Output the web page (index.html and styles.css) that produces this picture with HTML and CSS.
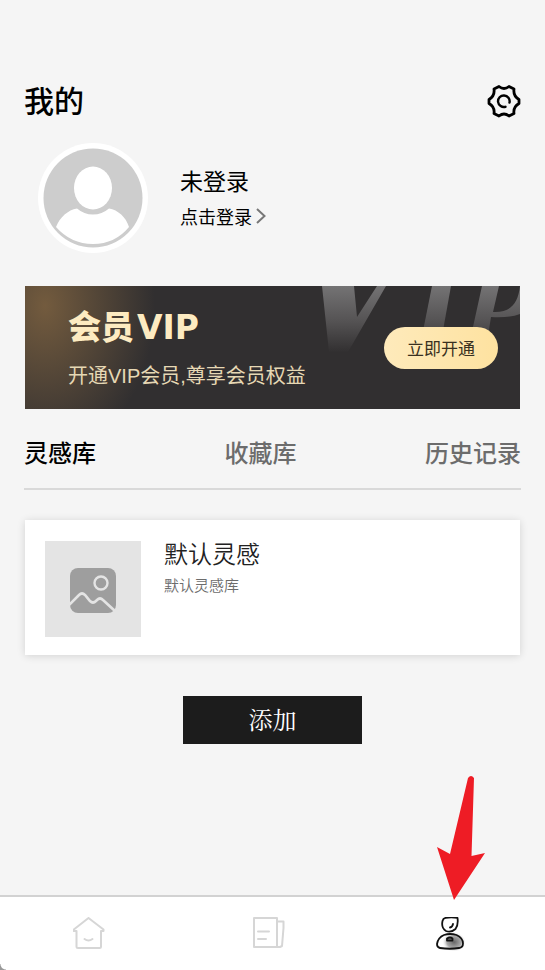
FILE: index.html
```html
<!DOCTYPE html>
<html lang="zh-CN">
<head>
<meta charset="utf-8">
<meta name="viewport" content="width=device-width, initial-scale=1">
<title>我的</title>
<link rel="stylesheet" href="styles.css">
</head>
<body>
<main class="page">
  <header class="topbar">
    <h1 class="topbar-title">我的</h1>
    <button class="icon-button" type="button" aria-label="设置">
      <svg width="34" height="34" viewBox="0 0 34 34" fill="none" stroke="#000" stroke-width="2.8" stroke-linejoin="round" stroke-linecap="round">
        <path d="M12 2.500Q17 6.500 22 2.500L27 5Q26 12 32 15.500V19.500Q26 23 27 29.500L22 32Q17 28 12 32L7 29.500Q8 23 2 19.500V15.500Q8 12 7 5Z"/>
        <path d="M22.500 18.500A5.800 5.800 0 1 0 18.500 22.800" stroke-width="2.400"/>
      </svg>
    </button>
  </header>

  <section class="profile">
    <svg class="avatar" viewBox="0 0 110 110" aria-hidden="true">
      <circle cx="55" cy="55" r="55" fill="#fff"/>
      <circle cx="55" cy="55" r="49.500" fill="#cdcdcd"/>
      <ellipse cx="55" cy="45" rx="19" ry="21.500" fill="#fff"/>
      <path d="M39 65.500Q46 71.500 55 71.500T71 65.500C80 67 88 74 91 84Q77 101 55 101T18 84C22 74 30 67 39 65.500Z" fill="#fff"/>
    </svg>
    <div class="profile-text">
      <p class="profile-name">未登录</p>
      <a class="profile-login" href="#login">点击登录
        <svg width="10" height="16" viewBox="0 0 10 16" fill="none" stroke="#777" stroke-width="2" aria-hidden="true"><path d="M1 1l7.500 7L1 15"/></svg>
      </a>
    </div>
  </section>

  <section class="vip">
    <svg class="vip-mark" width="198" height="70" viewBox="0 0 198 70" aria-hidden="true">
      <defs>
        <linearGradient id="fade" x1="0" y1="0" x2="0" y2="70" gradientUnits="userSpaceOnUse">
          <stop offset="0" stop-color="#747374"/>
          <stop offset="0.500" stop-color="#555354"/>
          <stop offset="0.950" stop-color="#312f30"/>
        </linearGradient>
      </defs>
      <g fill="url(#fade)">
        <path d="M0 0H32L35 31L55 0H64L26 66H7Z"/>
        <path d="M110 0H129L120 50H100Z"/>
        <path d="M160 0H177L171 26C188 27 196 18 198 0V28Q188 32 169 31L166 50H149Z"/>
      </g>
    </svg>
    <div class="vip-text">
      <h2 class="vip-title">会员<span class="vip-latin">VIP</span></h2>
      <p class="vip-note">开通VIP会员,尊享会员权益</p>
    </div>
    <button class="vip-button" type="button">立即开通</button>
  </section>

  <nav class="tabs" aria-label="内容">
    <button class="tab tab-active" type="button">灵感库</button>
    <button class="tab" type="button">收藏库</button>
    <button class="tab" type="button">历史记录</button>
  </nav>

  <article class="card">
    <div class="thumb">
      <svg width="48" height="48" viewBox="0 0 48 48" aria-hidden="true">
        <rect x="1" y="3" width="46" height="45" rx="8" fill="#9e9e9e"/>
        <circle cx="32" cy="18" r="6.500" fill="none" stroke="#e4e4e4" stroke-width="2.400"/>
        <path d="M0 40L10 30Q13 27 16 30L21 36Q24 39 27 36L28 35Q31 32 34 35L46 46" fill="none" stroke="#e4e4e4" stroke-width="2.600"/>
      </svg>
    </div>
    <div class="card-text">
      <h3 class="card-title">默认灵感</h3>
      <p class="card-note">默认灵感库</p>
    </div>
  </article>

  <button class="add" type="button">添加</button>
</main>

<nav class="bottom" aria-label="主导航">
  <a class="bottom-link" href="#home" aria-label="首页">
    <svg width="34" height="34" viewBox="0 0 34 34" fill="none" stroke="#d6d6d6" stroke-width="2" stroke-linejoin="round" stroke-linecap="round">
      <path d="M15.500 1L30.500 12.500V14H28V29.500Q28 31 26.500 31H5Q3.500 31 3.500 29.500V14H0.800V12.500Z"/>
      <path d="M11.500 22Q15.500 25 19.500 22"/>
    </svg>
  </a>
  <a class="bottom-link" href="#notes" aria-label="文档">
    <svg width="34" height="34" viewBox="0 0 34 34" fill="none" stroke="#d6d6d6" stroke-width="2" stroke-linejoin="round" stroke-linecap="round">
      <path d="M1 1H24V30H1ZM24 4.500H30.500V11L29 29L27 30H24M5 14.500H16M5 22H13"/>
    </svg>
  </a>
  <a class="bottom-link" href="#me" aria-label="我的" aria-current="page">
    <svg width="34" height="34" viewBox="0 0 34 34" fill="none" stroke="#111" stroke-width="1.800" stroke-linejoin="round" stroke-linecap="round">
      <defs>
        <radialGradient id="shade">
          <stop offset="0" stop-color="#666"/>
          <stop offset="0.600" stop-color="#aaa"/>
          <stop offset="1" stop-color="#fff" stop-opacity="0"/>
        </radialGradient>
      </defs>
      <ellipse cx="22" cy="25" rx="12" ry="10" fill="url(#shade)" stroke="none"/>
      <path d="M13.500 0.900Q19 0 25.500 0.900Q26.500 8 23.500 12Q19 16 14 14Q9 11 10.500 4Q11 1.500 13.500 0.900ZM18 10.500Q20.500 10 21 7"/>
      <path d="M12 18Q18 16 24.500 18Q31 21 31 26.500Q31 30.500 27 31Q18 32.500 8 31Q5 30.500 5 27Q6 20.500 12 18Z"/>
      <path d="M15 23.500V21.500Q18 19.500 20.500 21.500V23.500H15Z" fill="#888"/>
    </svg>
  </a>
  <svg class="pointer" width="50" height="126" viewBox="0 0 50 126" aria-hidden="true">
    <path d="M18 125L1 72L14 79L32 3Q35 -1 38 3L35.500 81L49 78Z" fill="#ee1c25"/>
  </svg>
  <span class="corner"></span>
</nav>
</body>
</html>
```

FILE: styles.css
```css
* {
  box-sizing: border-box;
  margin: 0;
  padding: 0;
}

body {
  display: flex;
  flex-direction: column;
  min-height: 100vh;
  background: #f5f5f5;
  color: #000;
  font-family: "Noto Sans CJK SC", sans-serif;
}

button {
  border: 0;
  background: none;
  font-family: inherit;
  cursor: pointer;
}

a {
  color: inherit;
  text-decoration: none;
}

svg {
  display: block;
}

.page {
  display: flex;
  flex: 1;
  flex-direction: column;
  padding: 78px 24px 40px;
}

.topbar {
  display: flex;
  align-items: center;
  justify-content: space-between;
}

.topbar-title {
  padding-bottom: 4px;
  font-size: 30px;
  font-weight: 500;
  line-height: 42px;
}

.profile {
  display: flex;
  align-items: center;
  gap: 32px;
  padding: 19px 14px 33px;
}

.avatar {
  width: 110px;
  height: 110px;
}

.profile-name {
  font-size: 23px;
  line-height: 36px;
}

.profile-login {
  display: flex;
  align-items: center;
  gap: 4px;
  font-size: 18px;
  line-height: 36px;
}

.vip {
  position: relative;
  display: flex;
  align-items: center;
  justify-content: space-between;
  height: 123px;
  margin: 0 1px;
  padding: 0 22px 0 43px;
  background:
    radial-gradient(ellipse 110px 150px at 20px 20px, #735b3e, transparent),
    #312f30;
}

.vip-mark {
  position: absolute;
  top: 0;
  right: 0;
}

.vip-title {
  display: flex;
  align-items: baseline;
  gap: 3px;
  color: #fdebc1;
  font-size: 33px;
  font-weight: 900;
  line-height: 48px;
}

.vip-text {
  padding-top: 6px;
}

.vip-latin {
  font-family: "DejaVu Sans", sans-serif;
  font-weight: 700;
}

.vip-note {
  color: #e6d8b4;
  font-family: "Liberation Sans", "Noto Sans CJK SC", sans-serif;
  font-size: 20px;
  line-height: 48px;
}

.vip-button {
  position: relative;
  width: 114px;
  height: 42px;
  border-radius: 21px;
  background: linear-gradient(90deg, #feeabb, #fee2a0);
  color: #393020;
  font-size: 17px;
}

.tabs {
  display: flex;
  justify-content: space-between;
  padding: 23px 0 16px;
  border-bottom: 2px solid #d9d9d9;
}

.tab {
  color: #6c6c6c;
  font-size: 24px;
  font-weight: 500;
  line-height: 40px;
}

.tab-active {
  color: #000;
}

.card {
  display: flex;
  gap: 23px;
  margin: 30px 1px 0;
  padding: 21px 20px 18px;
  background: #fff;
  box-shadow: 0 1px 8px rgba(0, 0, 0, 0.14);
}

.thumb {
  display: grid;
  place-items: center;
  width: 96px;
  height: 96px;
  background: #e4e4e4;
}

.card-title {
  margin-top: -7px;
  color: #222;
  font-size: 24px;
  font-weight: 350;
  line-height: 38px;
}

.card-note {
  color: #6c6c6c;
  font-size: 15px;
  font-weight: 350;
  line-height: 26px;
}

.add {
  align-self: center;
  width: 179px;
  height: 48px;
  margin-top: 41px;
  padding-bottom: 4px;
  background: #1c1c1c;
  color: #fff;
  font-family: "Noto Serif CJK SC", "Noto Sans CJK SC", serif;
  font-size: 24px;
}

.bottom {
  position: relative;
  display: flex;
  height: 75px;
  padding-right: 6px;
  border-top: 2px solid #d2d2d2;
  background: #fff;
}

.bottom-link {
  display: grid;
  flex: 1;
  place-items: center;
}

.pointer {
  position: absolute;
  right: 59px;
  bottom: 69px;
}

.corner {
  position: absolute;
  bottom: 0;
  left: 0;
  width: 6px;
  height: 6px;
  background: radial-gradient(circle at 6px 0, transparent 5px, #999 6px);
}
```
